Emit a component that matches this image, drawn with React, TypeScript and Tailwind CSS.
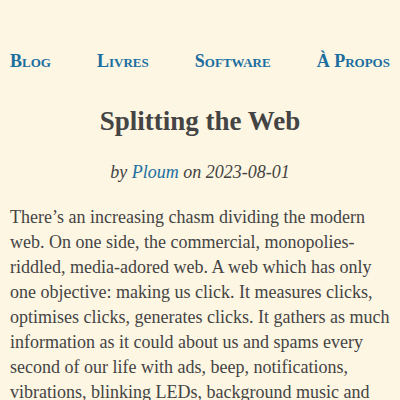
const navItems = ["Blog", "Livres", "Software", "À Propos"];

export default function App() {
  return (
    <div className="min-h-screen bg-[#fdf6e3] text-[#444] font-['Liberation_Serif',serif]">
      <nav className="flex justify-between px-[10px] pt-[49px]">
        {navItems.map((item) => (
          <a
            key={item}
            href="#"
            className="text-[18px] leading-[24px] font-bold text-[#1b6ea0] [font-variant:small-caps]"
          >
            {item}
          </a>
        ))}
      </nav>
      <main className="px-[10px]">
        <h1 className="mt-[32px] text-center text-[27px] leading-[32px] font-bold">
          Splitting the Web
        </h1>
        <p className="mt-[23px] text-center text-[18px] leading-[24px] italic">
          by{" "}
          <a href="#" className="text-[#1b6ea0]">
            Ploum
          </a>{" "}
          on 2023-08-01
        </p>
        <p className="mt-[21px] text-[18px] leading-[25px]">
          There’s an increasing chasm dividing the modern web. On one side, the
          commercial, monopolies-riddled, media-adored web. A web which has only
          one objective: making us click. It measures clicks, optimises clicks,
          generates clicks. It gathers as much information as it could about us
          and spams every second of our life with ads, beep, notifications,
          vibrations, blinking LEDs, background music and
        </p>
      </main>
    </div>
  );
}
